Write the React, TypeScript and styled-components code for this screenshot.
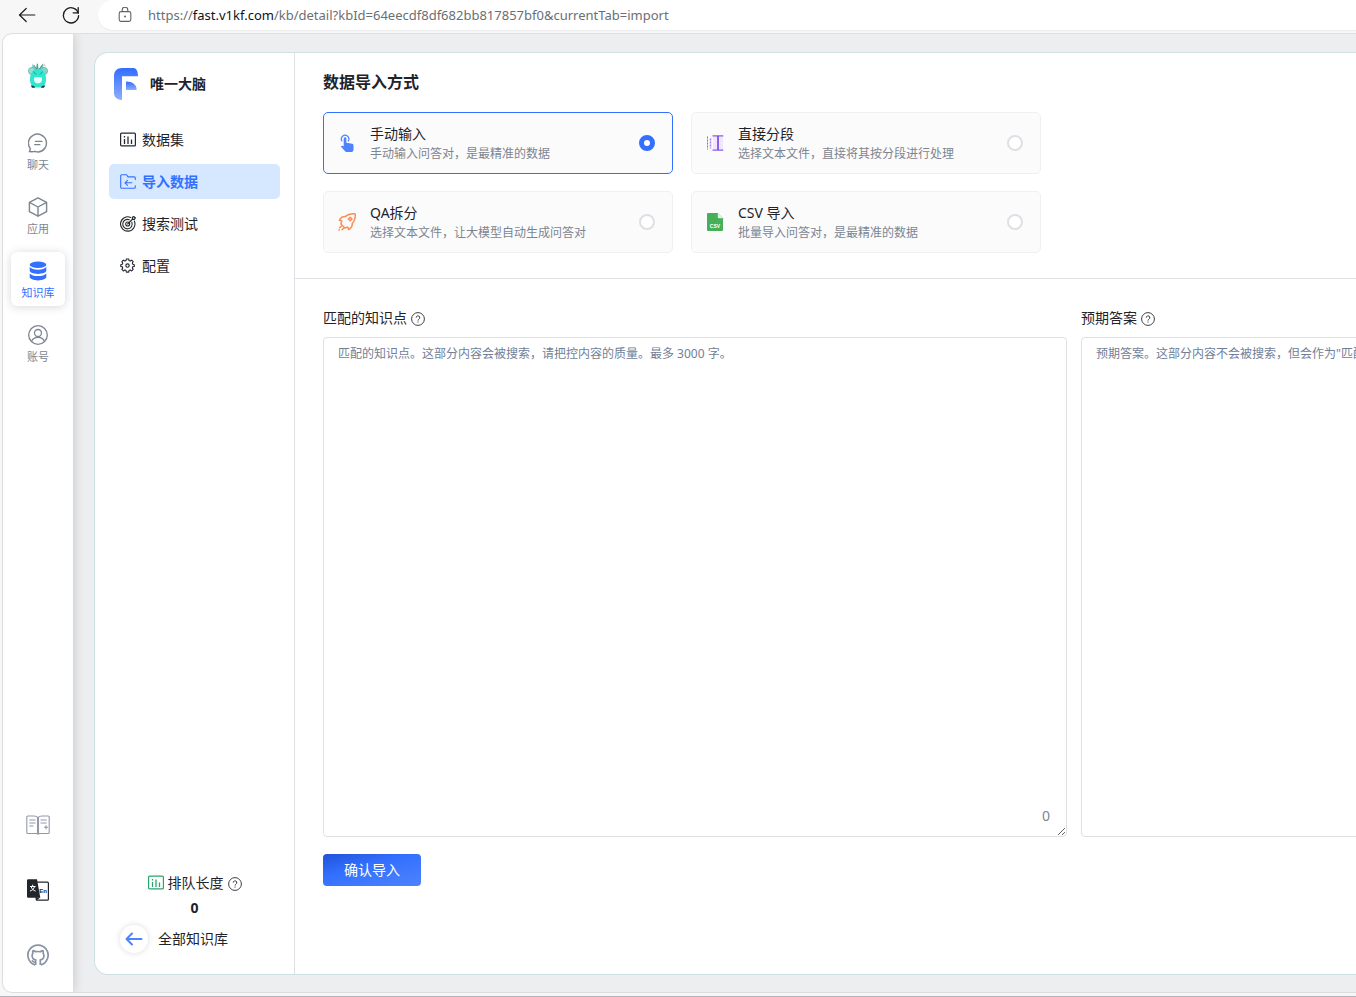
import React, { useState } from 'react';
import styled, { createGlobalStyle, css } from 'styled-components';

const GlobalStyle = createGlobalStyle`
  *, *::before, *::after { box-sizing: border-box; }
  html, body { margin: 0; height: 100%; overflow: hidden; }
  body {
    background: #f7f7f7;
    color: #1f2329;
    font-family: "Noto Sans", "Noto Sans CJK SC", sans-serif;
    font-size: 14px;
    line-height: 20px;
  }
  #root { height: 100%; }
  button, input, textarea { font: inherit; color: inherit; }
  svg { display: block; flex: none; }
`;

/* ---------- icons ---------- */

type IconProps = { size?: number };

const ArrowIcon = ({ size = 18 }: IconProps) => (
  <svg width={size} height={size} viewBox="0 0 18 18" fill="none" stroke="#1b1b1b" strokeWidth="1.2" strokeLinecap="round" strokeLinejoin="round">
    <path d="M8.2 2.500 1.500 9l6.700 6.500M1.500 9h15.300" />
  </svg>
);

const ReloadIcon = ({ size = 18 }: IconProps) => (
  <svg width={size} height={size} viewBox="0 0 18 18" fill="none" stroke="#1b1b1b" strokeWidth="1.3" strokeLinecap="round" strokeLinejoin="round">
    <path d="M16.3 7.2A7.6 7.6 0 1 0 16.6 9.6" />
    <path d="M16.2 1.6v5.2h-5" />
  </svg>
);

const LockIcon = () => (
  <svg width="14" height="16" viewBox="0 0 14 16" fill="none" stroke="#5f6368" strokeWidth="1.1">
    <rect x="1.2" y="4.6" width="11.6" height="9.8" rx="1.8" />
    <path d="M4.2 4.6V3a2.8 2.8 0 0 1 5.6 0v1.6" />
    <circle cx="7" cy="9.500" r="1" fill="#5f6368" stroke="none" />
  </svg>
);

const Avatar = () => (
  <svg width="22" height="28" viewBox="0 0 22 28" role="img" aria-label="avatar">
    <path d="M5.500 2.500 9 8l1-6.800 2 6.800 4-5.500 1 8H5z" fill="#6fc9be" />
    <path d="m7 4 3 5 .5-6M12 8.500l3.500-5" stroke="#35867e" strokeWidth=".8" fill="none" />
    <circle cx="5" cy="10" r="3.600" fill="#a5d9d0" stroke="#57b6aa" strokeWidth=".8" />
    <circle cx="17" cy="10" r="3.600" fill="#8fd2c8" stroke="#57b6aa" strokeWidth=".8" />
    <path d="M16.500 3.200 18.500 5" stroke="#c9a58b" />
    <path d="M11 8c4.800 0 8 4 8 10s-2 8.500-8 8.500S3 24 3 18s3.200-10 8-10z" fill="#2fe6cf" />
    <path d="M6.500 10.500 9 13.500m6.500-3L13 13.500" stroke="#1f9e92" strokeWidth="1" />
    <path d="M7 16.800q4-1.800 8 0 .6 5.700-4 5.700t-4-5.700z" fill="#eafffb" />
    <path d="M3.800 24.500q3.500-.5 4.500 2.200H5zM18.200 24.500q-3.500-.5-4.500 2.200H17z" fill="#12403c" />
  </svg>
);

const ChatIcon = () => (
  <svg width="20" height="20" viewBox="0 0 20 20" fill="none" stroke="#7c8590" strokeWidth="1.400" strokeLinecap="round" strokeLinejoin="round">
    <path d="M1.400 18.600c.7-1 .9-1.900.8-3.200A9 9 0 1 1 10.500 19c-1.300 0-2.400-.2-3.500-.7-1.700.5-3.400.6-5.600.3z" />
    <path d="M7.500 8.400h6.400M6.700 11.600h5.200" />
  </svg>
);

const CubeIcon = () => (
  <svg width="20" height="20" viewBox="0 0 20 20" fill="none" stroke="#7c8590" strokeWidth="1.400" strokeLinejoin="round">
    <path d="M10 .9 18.600 5.300v9.400L10 19.200 1.400 14.700V5.300z" />
    <path d="M1.400 5.300 10 10l8.600-4.700M10 10v9.200" />
  </svg>
);

const DatabaseIcon = () => (
  <svg width="20" height="20" viewBox="0 0 20 20" fill="#3370ff">
    <ellipse cx="10" cy="3.700" rx="8.300" ry="3.200" />
    <path d="M1.700 6.100C3 7.800 6.200 8.700 10 8.700s7-.9 8.300-2.600v3.700c0 1.700-3.700 3.100-8.300 3.100s-8.300-1.400-8.300-3.100z" />
    <path d="M1.700 12.400C3 14.100 6.200 15 10 15s7-.9 8.300-2.600v3.700c0 1.800-3.700 3.300-8.300 3.300s-8.300-1.500-8.300-3.300z" />
  </svg>
);

const UserIcon = () => (
  <svg width="20" height="20" viewBox="0 0 20 20" fill="none" stroke="#7c8590" strokeWidth="1.300">
    <circle cx="10" cy="10" r="9.300" />
    <circle cx="10" cy="8" r="3.500" />
    <path d="M3.700 16.400c.7-2.700 3.200-4.100 6.300-4.100s5.600 1.400 6.300 4.100" />
  </svg>
);

const BookIcon = () => (
  <svg width="24" height="20" viewBox="0 0 24 20" fill="none" stroke="#9298aa" strokeWidth="1.100">
    <path d="M12 2.500C11 1.300 9.500 1 8 1H1.800a1 1 0 0 0-1 1v15.500a1 1 0 0 0 1 1H8c1.600 0 3-.4 4 .6 1-1 2.400-.6 4-.6h6.200a1 1 0 0 0 1-1V2a1 1 0 0 0-1-1H16c-1.500 0-3 .3-4 1.500zM11.500 2.500V19M12.500 2.500V19" />
    <path d="M3.300 5h6.200M3.300 8h6.200M3.300 11h4.200M14.500 5h6.200M14.500 8h6.200M20 10.300v4M18 12.300h4" />
  </svg>
);

const LanguageIcon = () => (
  <svg width="24" height="24" viewBox="0 0 24 24">
    <rect x="10.200" y="4.200" width="12.200" height="18" rx="1" fill="#fff" stroke="#22262b" strokeWidth="1.200" />
    <path d="M2.300 1.200h8.700l3.300 18.600H2.300A1.300 1.300 0 0 1 1 18.500v-16a1.300 1.300 0 0 1 1.300-1.300z" fill="#22262b" />
    <path d="M9.800 19.500h4.500l-4 3z" fill="#22262b" />
    <path d="M6.700 6.700v1.500M4 8.500h5.600M8.500 8.800c-.7 2.100-2.200 3.600-4.500 4.300M5.200 8.800c.7 2.100 2.200 3.600 4.400 4.300" fill="none" stroke="#fff" strokeWidth="1" />
    <text x="13.300" y="14.500" fontSize="6" fontWeight="700" fontFamily="Liberation Sans, sans-serif" fill="#22262b">En</text>
  </svg>
);

const GithubIcon = () => (
  <svg width="22" height="22" viewBox="0 0 22 22" fill="none" stroke="#8a93a3" strokeWidth="1.700" strokeLinejoin="round">
    <path d="M8.200 20.900A10.100 10.100 0 1 1 13.800 20.900" />
    <path d="M8.700 21v-5.100c-2.400-.5-3.600-2-3.600-4.200 0-1 .3-1.800.8-2.400-.3-.8-.3-1.700.1-2.600.9 0 1.800.5 2.600 1.100 1.600-.4 3.200-.4 4.800 0 .8-.6 1.700-1.100 2.600-1.100.4.9.4 1.800.1 2.600.5.6.8 1.400.8 2.400 0 2.200-1.200 3.700-3.600 4.200V21" />
    <path d="M8.600 18.200c-1.800.5-2.500-.9-3.800-1.700" strokeWidth="1.500" />
  </svg>
);

const BrandLogo = () => (
  <svg width="24" height="32" viewBox="0 0 24 32">
    <defs>
      <linearGradient id="brand" x1="0" y1="0" x2="0" y2="1">
        <stop offset="0" stopColor="#326dff" />
        <stop offset="1" stopColor="#8eaeff" />
      </linearGradient>
    </defs>
    <path d="M8 0h11c3 0 5 2.500 5 8.300H8V32c-5-.3-8-3-8-7V8c0-5 3-8 8-8z" fill="url(#brand)" />
    <path d="M12 13.500c6.500 0 10.500 3 10.700 8.500H12z" fill="url(#brand)" />
  </svg>
);

const DatasetIcon = ({ color = '#24282d' }: { color?: string }) => (
  <svg width="16" height="16" viewBox="0 0 16 16" fill="none" stroke={color} strokeWidth="1.200">
    <rect x=".6" y="1.100" width="14.800" height="12.800" rx="1" />
    <path d="M4.500 4v1.500M4.500 7v5M8 4.500V12M11.500 7.500V12" strokeWidth="1.300" />
  </svg>
);

const ImportIcon = () => (
  <svg width="16" height="16" viewBox="0 0 16 16" fill="none" stroke="#3370ff" strokeWidth="1.100" strokeLinecap="round" strokeLinejoin="round">
    <path d="M15.300 5.500V3.900a1 1 0 0 0-1-1H8L6.500.8H1.700a1 1 0 0 0-1 1v11.400a1 1 0 0 0 1 1h12.600a1 1 0 0 0 1-1v-1.500" />
    <path d="M11.800 8.800H5M7.500 6.300 5 8.800l2.500 2.500" />
  </svg>
);

const TargetIcon = () => (
  <svg width="16" height="16" viewBox="0 0 16 16" fill="none" stroke="#24282d" strokeWidth="1.100" strokeLinecap="round">
    <path d="M14.300 5A7.200 7.200 0 1 1 10.700 1.400" />
    <path d="M11.800 6.300A4.700 4.700 0 1 1 9.300 3.800" />
    <circle cx="7.700" cy="8" r="2" />
    <path d="m7.700 8 5-5M12.500 3.200l-.2-2L14 .3l.3 1.200 1.200.3-1.100 1.600z" />
  </svg>
);

const GearIcon = () => (
  <svg width="16" height="16" viewBox="0 0 17 17" fill="none" stroke="#24282d" strokeWidth="1.200" strokeLinejoin="round">
    <path d="M6.800 1h2.400l.4 1.700 1.300.5 1.500-.9 1.600 1.600-.9 1.500.5 1.300 1.600.4v1.800l-1.600.4-.5 1.300.9 1.500-1.600 1.600-1.500-.9-1.300.5-.4 1.700H6.800l-.4-1.700-1.300-.5-1.500.9L2 12.100l.9-1.500-.5-1.300L.8 8.900V7.100l1.600-.4.5-1.300L2 3.900l1.600-1.600 1.500.9 1.300-.5z" />
    <circle cx="8" cy="8" r="1.800" />
  </svg>
);

const HelpIcon = () => (
  <svg width="14" height="16" viewBox="0 -1 14 16" fill="none" stroke="#3c4046" strokeWidth="1">
    <circle cx="7" cy="8" r="6.400" />
    <path d="M5.200 6.700a1.800 1.800 0 1 1 2.700 1.500c-.6.400-.9.700-.9 1.400" />
    <path d="M7 10.500v1.100" />
  </svg>
);

const TouchIcon = () => (
  <svg width="18" height="18" viewBox="0 0 18 18">
    <path d="M4.200 7.300a3.700 3.700 0 1 1 5.800 0" fill="none" stroke="#4e83fd" strokeWidth="1.200" />
    <path d="M5.700 4.500a1.300 1.300 0 0 1 2.700 0v4.200l5.800 1c.8.2 1.300.7 1.300 1.500v4.900c0 1.100-.7 1.900-1.800 1.900H8.600c-.8 0-1.300-.3-1.800-.9l-4-4.700c.7-1 1.800-.9 2.900-.1z" fill="#4e83fd" />
  </svg>
);

const SegmentIcon = () => (
  <svg width="18" height="18" viewBox="0 0 18 18" fill="none">
    <path d="M7 2h10v14H7z" fill="#efe7fd" />
    <path d="M1.500 2.500v13" stroke="#8f5bea" strokeDasharray="2 1" />
    <path d="M4.500 4.500v10" stroke="#a77cf0" strokeWidth="1.500" strokeDasharray="2 1" />
    <path d="M6.500 1.800h10.800M6.500 16.200h10.800" stroke="#8f5bea" strokeWidth="1.300" />
    <path d="M12 2v14" stroke="#7f46e6" strokeWidth="1.700" />
  </svg>
);

const RocketIcon = () => (
  <svg width="18" height="18" viewBox="0 0 18 18" fill="none" stroke="#fa8c55" strokeWidth="1.500" strokeLinecap="round" strokeLinejoin="round">
    <path d="M17.200.9c-4.300-.3-7.400.4-9.800 2.700-2.600-.3-4.600 1-6 3.700l2.400.7-.9 3 4 4 2.900-.9.8 2.500c2.600-1.500 3.900-3.500 3.600-6.100 2.300-2.400 3.300-5.300 3-9.600z" />
    <path d="m12.200 4.200 1.800 1.800-1.800 1.800L10.400 6zM3.300 13.200l-1.600 1.600M5.500 15.200l-1.400 1.500M1.300 16.800l-.2.200" />
  </svg>
);

const CsvIcon = () => (
  <svg width="18" height="18" viewBox="0 0 18 18">
    <path d="M2 0h9.800L17 5.200V17a1 1 0 0 1-1 1H2a1 1 0 0 1-1-1V1a1 1 0 0 1 1-1z" fill="#45b058" />
    <path d="M11.800 0 17 5.200h-4.200a1 1 0 0 1-1-1z" fill="#dff3e3" />
    <text x="9" y="15.300" fontSize="5" fontWeight="700" textAnchor="middle" fontFamily="Liberation Sans, sans-serif" fill="#fff">CSV</text>
  </svg>
);

const BackIcon = () => (
  <svg width="18" height="18" viewBox="0 0 18 18" fill="none" stroke="#4e83fd" strokeWidth="2" strokeLinecap="round" strokeLinejoin="round">
    <path d="M7 3.500 1.500 9 7 14.500M1.500 9h15" />
  </svg>
);

/* ---------- browser frame ---------- */

const Browser = styled.div`
  display: flex;
  flex-direction: column;
  height: 100%;
  padding-bottom: 3px;
  border-bottom: 1px solid #b0b3bb;
`;

const BrowserBar = styled.header`
  display: flex;
  flex: none;
  height: 33px;
  padding: 0 0 3px 18px;
`;

const BrowserButton = styled.button`
  display: grid;
  place-items: center;
  width: 18px;
  margin-right: 26px;
  padding: 0;
  border: 0;
  background: none;
`;

const AddressBar = styled.div`
  display: flex;
  flex: 1;
  align-items: center;
  gap: 16px;
  margin-left: -8px;
  padding-left: 20px;
  border-radius: 15px 0 0 15px;
  background: #fff;
  box-shadow: 0 1px 1px #ececec;
`;

const Url = styled.span`
  font-size: 13px;
  color: #6b6f73;
  white-space: nowrap;
`;

const Host = styled.span`
  color: #111;
`;

const Page = styled.div`
  display: flex;
  flex: 1;
  min-height: 0;
  margin-left: 2px;
  border: 1px solid #dcdee0;
  border-right: 0;
  border-radius: 10px 0 0 10px;
  background: #edeef0;
  overflow: hidden;
`;

/* ---------- main navigation ---------- */

const Rail = styled.nav`
  display: flex;
  flex: none;
  flex-direction: column;
  align-items: center;
  width: 70px;
  padding: 27px 0 25px;
  background: #fff;
  box-shadow: 1px 0 10px rgba(0, 0, 0, 0.16);
`;

const RailList = styled.div`
  display: flex;
  flex: 1;
  flex-direction: column;
  gap: 10px;
  padding-top: 35px;
`;

const RailLink = styled.a<{ $active?: boolean }>`
  display: flex;
  flex-direction: column;
  align-items: center;
  gap: 4px;
  width: 54px;
  height: 54px;
  padding-top: 9px;
  border-radius: 6px;
  color: #7c8590;
  font-size: 11px;
  line-height: 16px;
  text-decoration: none;
  ${(p) => p.$active && css`
    color: #3370ff;
    background: #fff;
    box-shadow: 0 1px 10px rgba(0, 0, 0, 0.16);
  `}
`;

const RailTools = styled.div`
  display: flex;
  flex-direction: column;
  align-items: center;
  gap: 41px;
`;

const ToolLink = styled.a`
  display: grid;
  place-items: center;
  width: 24px;
  height: 24px;
`;

/* ---------- knowledge base panel ---------- */

const Stage = styled.div`
  display: flex;
  flex: 1;
  min-width: 0;
  padding: 18px 0 17px 21px;
`;

const Panel = styled.div`
  display: flex;
  flex: 1;
  min-width: 0;
  border: 1px solid #cfe0e2;
  border-right: 0;
  border-radius: 14px 0 0 14px;
  background: #fff;
  overflow: hidden;
`;

const Side = styled.aside`
  display: flex;
  flex: none;
  flex-direction: column;
  width: 200px;
  padding: 15px 14px 21px;
  border-right: 1px solid #dee0e3;
`;

const Brand = styled.div`
  display: flex;
  align-items: center;
  gap: 12px;
  padding-left: 5px;
  font-weight: 700;
`;

const Menu = styled.nav`
  display: flex;
  flex: 1;
  flex-direction: column;
  gap: 7px;
  padding-top: 22px;
`;

const MenuLink = styled.a<{ $active?: boolean }>`
  display: flex;
  align-items: center;
  gap: 6px;
  height: 35px;
  padding-left: 11px;
  border-radius: 5px;
  color: ${(p) => (p.$active ? '#3370ff' : '#1f2329')};
  background: ${(p) => (p.$active ? '#d6e8ff' : 'transparent')};
  font-weight: ${(p) => (p.$active ? 700 : 400)};
  text-decoration: none;
`;

const Queue = styled.div`
  display: flex;
  flex-direction: column;
  align-items: center;
  gap: 5px;
`;

const QueueTitle = styled.div`
  display: flex;
  align-items: center;
  gap: 4px;
`;

const QueueCount = styled.strong`
  font-weight: 700;
`;

const BackLink = styled.a`
  display: flex;
  align-items: center;
  gap: 10px;
  margin-top: 7px;
  padding-left: 11px;
  color: inherit;
  text-decoration: none;
`;

const BackCircle = styled.span`
  display: grid;
  place-items: center;
  width: 28px;
  height: 28px;
  border-radius: 50%;
  background: #fff;
  box-shadow: 0 0 6px rgba(0, 0, 0, 0.14);
`;

/* ---------- import form ---------- */

const Content = styled.main`
  flex: 1;
  min-width: 0;
  overflow: hidden;
`;

const Methods = styled.section`
  padding: 17px 28px 25px;
  border-bottom: 1px solid #dee0e3;
`;

const Heading = styled.h1`
  margin: 0 0 18px;
  font-size: 16px;
  line-height: 24px;
  font-weight: 700;
`;

const MethodGrid = styled.div`
  display: grid;
  grid-template-columns: repeat(auto-fill, 350px);
  gap: 17px 18px;
  max-width: 740px;
`;

const MethodCard = styled.label<{ $active: boolean }>`
  display: flex;
  align-items: center;
  gap: 14px;
  height: 62px;
  padding: 0 17px 0 14px;
  border: 1px solid ${(p) => (p.$active ? '#3370ff' : '#eff0f1')};
  border-radius: 5px;
  background: #fbfbfc;
  cursor: pointer;
`;

const MethodText = styled.span`
  display: flex;
  flex: 1;
  flex-direction: column;
  padding-top: 2px;
`;

const MethodDesc = styled.span`
  color: #7c8590;
  font-size: 12px;
`;

const Radio = styled.input`
  appearance: none;
  width: 16px;
  height: 16px;
  margin: 0;
  border: 2px solid #dee0e3;
  border-radius: 50%;
  background: #fff;
  &:checked {
    border: 5px solid #3370ff;
  }
`;

const Form = styled.form`
  padding: 29px 28px;
`;

const Fields = styled.div`
  display: grid;
  grid-template-columns: repeat(2, minmax(744px, 1fr));
  gap: 14px;
`;

const Field = styled.div`
  position: relative;
  display: flex;
  flex-direction: column;
  gap: 9px;
`;

const FieldLabel = styled.label`
  display: flex;
  align-items: center;
  gap: 4px;
`;

const TextArea = styled.textarea`
  display: block;
  width: 100%;
  height: 500px;
  padding: 7px 14px;
  border: 1px solid #dee0e3;
  border-radius: 4px;
  background: #fff;
  font-size: 12px;
  line-height: 18px;
  outline: 0;
  &::placeholder {
    color: #718096;
    opacity: 1;
  }
`;

const Counter = styled.output`
  position: absolute;
  right: 17px;
  bottom: 11px;
  color: #7c8590;
`;

const SubmitButton = styled.button`
  width: 98px;
  height: 32px;
  margin-top: 17px;
  padding: 0;
  border: 0;
  border-radius: 4px;
  color: #fff;
  background: linear-gradient(165deg, #2152d9 0%, #3370ff 40%, #4e83fd 100%);
  cursor: pointer;
`;

const railItems = [
  { label: '聊天', icon: <ChatIcon /> },
  { label: '应用', icon: <CubeIcon /> },
  { label: '知识库', icon: <DatabaseIcon />, active: true },
  { label: '账号', icon: <UserIcon /> },
];

const menuItems = [
  { label: '数据集', icon: <DatasetIcon /> },
  { label: '导入数据', icon: <ImportIcon />, active: true },
  { label: '搜索测试', icon: <TargetIcon /> },
  { label: '配置', icon: <GearIcon /> },
];

const methods = [
  { id: 'manual', title: '手动输入', desc: '手动输入问答对，是最精准的数据', icon: <TouchIcon /> },
  { id: 'chunk', title: '直接分段', desc: '选择文本文件，直接将其按分段进行处理', icon: <SegmentIcon /> },
  { id: 'qa', title: 'QA拆分', desc: '选择文本文件，让大模型自动生成问答对', icon: <RocketIcon /> },
  { id: 'csv', title: 'CSV 导入', desc: '批量导入问答对，是最精准的数据', icon: <CsvIcon /> },
];

export default function App() {
  const [method, setMethod] = useState('manual');
  const [question, setQuestion] = useState('');

  return (
    <Browser lang="zh-CN">
      <GlobalStyle />
      <BrowserBar>
        <BrowserButton aria-label="后退"><ArrowIcon /></BrowserButton>
        <BrowserButton aria-label="刷新"><ReloadIcon /></BrowserButton>
        <AddressBar>
          <LockIcon />
          <Url>https://<Host>fast.v1kf.com</Host>/kb/detail?kbId=64eecdf8df682bb817857bf0&amp;currentTab=import</Url>
        </AddressBar>
      </BrowserBar>
      <Page>
        <Rail>
          <Avatar />
          <RailList>
            {railItems.map((item) => (
              <RailLink key={item.label} href="#" $active={item.active}>
                {item.icon}
                {item.label}
              </RailLink>
            ))}
          </RailList>
          <RailTools>
            <ToolLink href="#" aria-label="文档"><BookIcon /></ToolLink>
            <ToolLink href="#" aria-label="语言"><LanguageIcon /></ToolLink>
            <ToolLink href="#" aria-label="GitHub"><GithubIcon /></ToolLink>
          </RailTools>
        </Rail>
        <Stage>
          <Panel>
            <Side>
              <Brand><BrandLogo />唯一大脑</Brand>
              <Menu>
                {menuItems.map((item) => (
                  <MenuLink key={item.label} href="#" $active={item.active}>
                    {item.icon}
                    {item.label}
                  </MenuLink>
                ))}
              </Menu>
              <Queue>
                <QueueTitle><DatasetIcon color="#2ba471" />排队长度<HelpIcon /></QueueTitle>
                <QueueCount>0</QueueCount>
              </Queue>
              <BackLink href="#"><BackCircle><BackIcon /></BackCircle>全部知识库</BackLink>
            </Side>
            <Content>
              <Methods>
                <Heading>数据导入方式</Heading>
                <MethodGrid>
                  {methods.map((m) => (
                    <MethodCard key={m.id} $active={method === m.id}>
                      {m.icon}
                      <MethodText>
                        <span>{m.title}</span>
                        <MethodDesc>{m.desc}</MethodDesc>
                      </MethodText>
                      <Radio type="radio" name="method" value={m.id} checked={method === m.id} onChange={() => setMethod(m.id)} />
                    </MethodCard>
                  ))}
                </MethodGrid>
              </Methods>
              <Form onSubmit={(e) => e.preventDefault()}>
                <Fields>
                  <Field>
                    <FieldLabel htmlFor="question">匹配的知识点<HelpIcon /></FieldLabel>
                    <TextArea
                      id="question"
                      maxLength={3000}
                      value={question}
                      onChange={(e) => setQuestion(e.target.value)}
                      placeholder="匹配的知识点。这部分内容会被搜索，请把控内容的质量。最多 3000 字。"
                    />
                    <Counter htmlFor="question">{question.length}</Counter>
                  </Field>
                  <Field>
                    <FieldLabel htmlFor="answer">预期答案<HelpIcon /></FieldLabel>
                    <TextArea
                      id="answer"
                      maxLength={3000}
                      placeholder={'预期答案。这部分内容不会被搜索，但会作为"匹配的知识点"的内容补充，通常是问题的答案。最多 3000 字。'}
                    />
                  </Field>
                </Fields>
                <SubmitButton type="submit">确认导入</SubmitButton>
              </Form>
            </Content>
          </Panel>
        </Stage>
      </Page>
    </Browser>
  );
}
